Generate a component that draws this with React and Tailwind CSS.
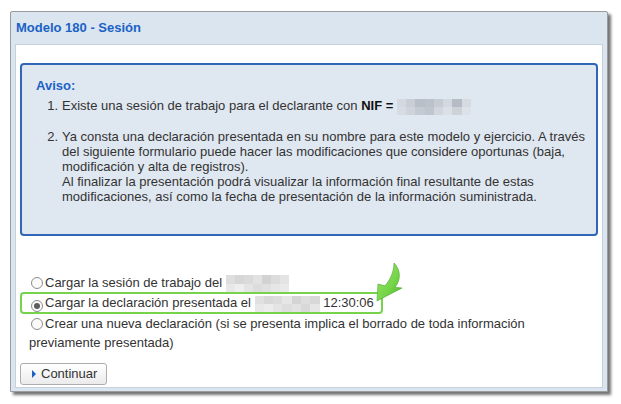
import React from 'react'

/* ── blurred (pixelated) block that hides personal data ── */
function Pixelated({ width, height, cols }) {
  return (
    <span
      className="my-[-5px] inline-flex overflow-hidden align-middle"
      style={{ width, height }}
    >
      {cols.map(([top, bottom], i) => (
        <span key={i} className="flex flex-1 flex-col">
          <span className="flex-1" style={{ background: top }} />
          <span className="flex-1" style={{ background: bottom }} />
        </span>
      ))}
    </span>
  )
}

function Radio({ checked }) {
  return (
    <span className="ml-[2px] mr-[2px] inline-flex h-[12px] w-[12px] items-center justify-center rounded-full border border-[#8d8d8d] bg-[#fafafa] align-[-2px]">
      {checked && <span className="h-[6px] w-[6px] rounded-full bg-[#5e5e5e]" />}
    </span>
  )
}

function GreenArrow() {
  return (
    <svg
      className="pointer-events-none absolute left-[354px] top-[216px]"
      width="34"
      height="42"
      viewBox="0 0 34 42"
    >
      <defs>
        <linearGradient id="ga" x1="0" y1="0" x2="1" y2="1">
          <stop offset="0" stopColor="#9be86c" />
          <stop offset="0.6" stopColor="#74d447" />
          <stop offset="1" stopColor="#4fb02c" />
        </linearGradient>
      </defs>
      <path
        d="M24,2 C31,9 31,19 25,26.3 L32,27 L7,40 L8,23 L15,24.8 C20,19 24,11 24,2 Z"
        fill="url(#ga)"
        stroke="#4ea52e"
        strokeWidth="0.6"
        strokeLinejoin="round"
      />
    </svg>
  )
}

export default function App() {
  return (
    <div className="min-h-screen bg-white pl-[10px] pt-[11px] font-['Liberation_Sans',Arial,sans-serif] text-[13px] text-[#333]">
      {/* ══ window ══ */}
      <div className="flex h-[381px] w-[598px] flex-col overflow-hidden rounded-t-[2px] border border-[#9b9b9b] bg-[#dae5ef] shadow-[3px_3px_3px_rgba(0,0,0,0.55)]">
        <div className="flex h-[32px] shrink-0 items-center pl-[5px] text-[13px] font-bold text-[#1a62c6]">
          Modelo 180 - Sesión
        </div>

        <div className="relative mx-[4px] mb-[3px] min-h-0 flex-1 border border-[#c7d1dc] bg-white">
          {/* ── aviso ── */}
          <div className="mx-[4px] mt-[18px] h-[173px] rounded-[4px] border-2 border-[#2f67b6] bg-[#dfe7f0] pl-[14px] pt-[13px]">
            <div className="text-[13px] font-bold leading-[16px] text-[#1a62c6]">Aviso:</div>
            <div className="mt-[4px] leading-[15px]">
              <div className="flex h-[15px] whitespace-nowrap">
                <span className="w-[22px] text-right">1.</span>
                <span className="ml-[4px]">
                  Existe una sesión de trabajo para el declarante con <b className="text-[#111]">NIF =</b>{' '}
                  <Pixelated
                    width={74}
                    height={16}
                    cols={[
                      ['#d3d9df', '#d6dce2'],
                      ['#c9ced6', '#cfd4db'],
                      ['#b9bfc8', '#c4cad2'],
                      ['#bcc2ca', '#c0c6ce'],
                      ['#c6ccd4', '#d2d7de'],
                      ['#d4d9df', '#dbe0e6'],
                      ['#b6bcc5', '#cdd2d9'],
                      ['#d6dbe1', '#dde2e8'],
                    ]}
                  />
                </span>
              </div>
              <div className="mt-[16px] flex whitespace-nowrap">
                <span className="w-[22px] text-right">2.</span>
                <span className="ml-[4px]">
                  Ya consta una declaración presentada en su nombre para este modelo y ejercicio. A través
                  <br />
                  del siguiente formulario puede hacer las modificaciones que considere oportunas (baja,
                  <br />
                  modificación y alta de registros).
                  <br />
                  Al finalizar la presentación podrá visualizar la información final resultante de estas
                  <br />
                  modificaciones, así como la fecha de presentación de la información suministrada.
                </span>
              </div>
            </div>
          </div>

          {/* ── options ── */}
          <div className="ml-[4px] mt-[37px]">
            <div className="h-[19px] whitespace-nowrap pl-[9px] leading-[19px]">
              <Radio />
              Cargar la sesión de trabajo del{' '}
              <Pixelated
                width={63}
                height={17}
                cols={[
                  ['#dedede', '#e8e8e8'],
                  ['#d6d6d6', '#eeeeee'],
                  ['#dadada', '#e4e4e4'],
                  ['#e2e2e2', '#dcdcdc'],
                  ['#d2d2d2', '#e0e0e0'],
                  ['#dcdcdc', '#e6e6e6'],
                  ['#e4e4e4', '#eaeaea'],
                ]}
              />
            </div>
            <div className="h-[22px] w-[363px] whitespace-nowrap rounded-[4px] border-2 border-[#76d44c] pl-[7px] leading-[18px]">
              <Radio checked />
              Cargar la declaración presentada el{' '}
              <Pixelated
                width={65}
                height={16}
                cols={[
                  ['#e0e0e0', '#e8e8e8'],
                  ['#d8d8d8', '#ececec'],
                  ['#dcdcdc', '#e4e4e4'],
                  ['#e6e6e6', '#dedede'],
                  ['#d4d4d4', '#e2e2e2'],
                  ['#dedede', '#d8d8d8'],
                  ['#d8d8d8', '#e6e6e6'],
                ]}
              />{' '}
              12:30:06
            </div>
            <div className="pl-[9px] pr-[4px] leading-[19px]">
              <Radio />
              Crear una nueva declaración (si se presenta implica el borrado de toda información
              <br />
              previamente presentada)
            </div>

            <button
              type="button"
              className="mt-[11px] flex h-[22px] w-[87px] items-center rounded-[3px] border border-[#adadad] bg-gradient-to-b from-white to-[#ebebeb] pl-[11px] text-[13px] text-[#333]"
            >
              <span className="mr-[5px] h-0 w-0 border-y-[4px] border-l-[4px] border-y-transparent border-l-[#1a62c6]" />
              Continuar
            </button>
          </div>

          <GreenArrow />
        </div>
      </div>
    </div>
  )
}
